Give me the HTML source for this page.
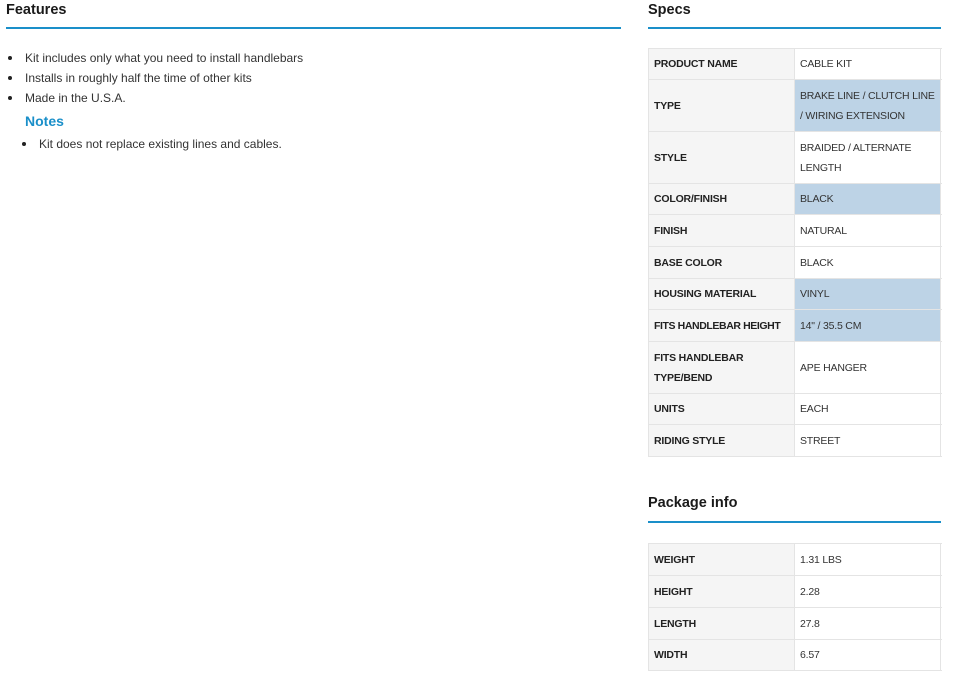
<!DOCTYPE html>
<html><head><style>
body{margin:0;background:#fff;font-family:"Liberation Sans",sans-serif;color:#222;width:960px;height:678px;position:relative;overflow:hidden}
h2{position:absolute;margin:0;font-size:14.5px;font-weight:bold;color:#1a1a1a}
.line{position:absolute;height:2px;background:#1a8fc9}
ul{position:absolute;margin:0;padding:0;list-style:none;font-size:12px;color:#333}
li{position:relative;padding-left:19px;height:20px;line-height:20px}
li:before{content:"";position:absolute;left:2px;top:8px;width:4px;height:4px;border-radius:50%;background:#222}
.notes{position:absolute;left:25px;top:113px;font-size:14px;font-weight:bold;color:#1a8fc9}
.tbl{position:absolute;left:648px;width:293px;border-top:1px solid #e4e4e4;border-left:1px solid #e4e4e4}
.r{display:flex;border-bottom:1px solid #e4e4e4;font-size:10.5px;letter-spacing:-0.2px;box-sizing:border-box}
.r div{display:flex;align-items:center;padding:0 5px;line-height:20px;color:#333;border-right:1px solid #e4e4e4;box-sizing:border-box}
.r div:first-child{width:146px;background:#f5f5f5;font-weight:bold;color:#222}
.r div:last-child{width:146px}
.r div.h{background:#bdd3e6}
</style></head><body>
<h2 style="left:6px;top:2px">Features</h2>
<div class="line" style="left:6px;top:27px;width:615px"></div>
<ul style="left:6px;top:48px">
<li>Kit includes only what you need to install handlebars</li>
<li>Installs in roughly half the time of other kits</li>
<li>Made in the U.S.A.</li>
</ul>
<div class="notes">Notes</div>
<ul style="left:20px;top:134px"><li>Kit does not replace existing lines and cables.</li></ul>

<h2 style="left:648px;top:2px">Specs</h2>
<div class="line" style="left:648px;top:27px;width:293px"></div>
<div class="tbl" style="top:48px">
<div class="r" style="height:31px"><div>PRODUCT NAME</div><div>CABLE KIT</div></div>
<div class="r" style="height:52px"><div>TYPE</div><div class="h">BRAKE LINE / CLUTCH LINE / WIRING EXTENSION</div></div>
<div class="r" style="height:52px"><div>STYLE</div><div>BRAIDED / ALTERNATE LENGTH</div></div>
<div class="r" style="height:31px"><div>COLOR/FINISH</div><div class="h">BLACK</div></div>
<div class="r" style="height:32px"><div>FINISH</div><div>NATURAL</div></div>
<div class="r" style="height:32px"><div>BASE COLOR</div><div>BLACK</div></div>
<div class="r" style="height:31px"><div>HOUSING MATERIAL</div><div class="h">VINYL</div></div>
<div class="r" style="height:32px"><div style="letter-spacing:-0.4px">FITS HANDLEBAR HEIGHT</div><div class="h">14" / 35.5 CM</div></div>
<div class="r" style="height:52px"><div>FITS HANDLEBAR TYPE/BEND</div><div>APE HANGER</div></div>
<div class="r" style="height:31px"><div>UNITS</div><div>EACH</div></div>
<div class="r" style="height:32px"><div>RIDING STYLE</div><div>STREET</div></div>
</div>

<h2 style="left:648px;top:495px">Package info</h2>
<div class="line" style="left:648px;top:521px;width:293px"></div>
<div class="tbl" style="top:543px">
<div class="r" style="height:32px"><div>WEIGHT</div><div>1.31 LBS</div></div>
<div class="r" style="height:32px"><div>HEIGHT</div><div>2.28</div></div>
<div class="r" style="height:32px"><div>LENGTH</div><div>27.8</div></div>
<div class="r" style="height:31px"><div>WIDTH</div><div>6.57</div></div>
</div>
</body></html>
